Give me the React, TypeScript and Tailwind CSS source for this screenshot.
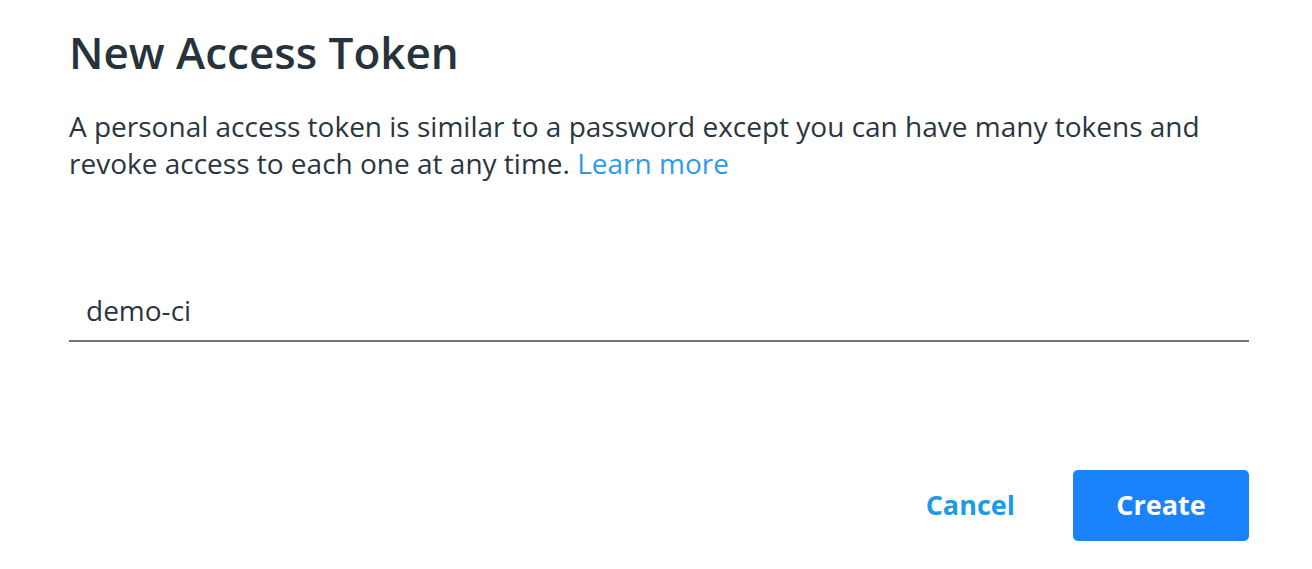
export default function App() {
  return (
    <div className="w-[1312px] h-[569px] bg-white pl-[69px] pr-[63px] pt-[22px] font-['Open_Sans',sans-serif] text-[#27323c]">
      <h1 className="text-[44px] leading-[60px] font-semibold text-[#26323c]">New Access Token</h1>
      <p className="mt-[26px] text-[28px] leading-[37px] text-[#2b3540]">
        A personal access token is similar to a password except you can have many tokens and revoke access to each one at
        any time. <a href="#" className="text-[#2f9be6]">Learn more</a>
      </p>
      <div className="mt-[109px] border-b-2 border-[#6f757b] pl-[17px] pb-[11px]">
        <input
          defaultValue="demo-ci"
          className="w-full bg-transparent outline-none text-[28px] leading-[38px] text-[#2b3540]"
        />
      </div>
      <div className="mt-[128px] flex justify-end items-center gap-[58px]">
        <button className="text-[27px] font-bold text-[#1e9be4]">Cancel</button>
        <button className="w-[176px] h-[71px] rounded-[5px] bg-[#1a82fb] text-white text-[27px] font-bold">Create</button>
      </div>
    </div>
  );
}
